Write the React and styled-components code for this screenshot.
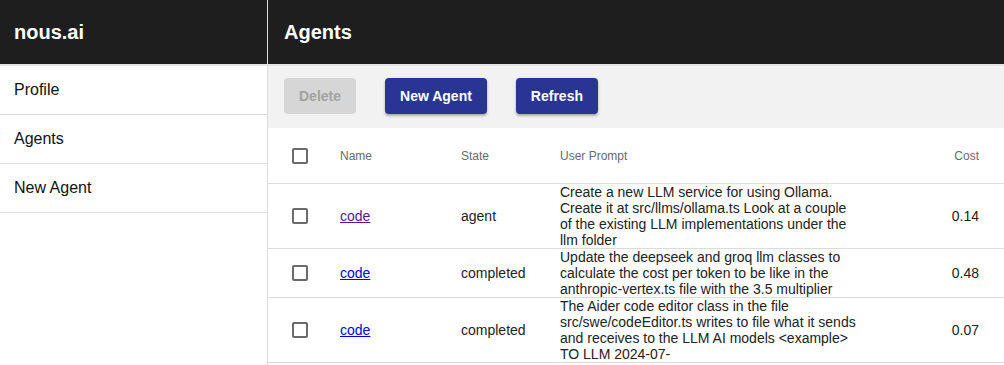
import React from 'react';
import styled, { createGlobalStyle } from 'styled-components';

const GlobalStyle = createGlobalStyle`
  html, body {
    margin: 0;
    padding: 0;
    background: #fff;
    font-family: "Liberation Sans", Arial, Helvetica, sans-serif;
  }
`

const agents = [
  {
    name: 'code',
    visited: true,
    state: 'agent',
    prompt: 'Create a new LLM service for using Ollama. Create it at src/llms/ollama.ts Look at a couple of the existing LLM implementations under the llm folder',
    cost: '0.14',
  },
  {
    name: 'code',
    state: 'completed',
    prompt: 'Update the deepseek and groq llm classes to calculate the cost per token to be like in the anthropic-vertex.ts file with the 3.5 multiplier',
    cost: '0.48',
  },
  {
    name: 'code',
    state: 'completed',
    prompt: 'The Aider code editor class in the file src/swe/codeEditor.ts writes to file what it sends and receives to the LLM AI models <example> TO LLM 2024-07-',
    cost: '0.07',
  },
];

export default function App(){
  return(
    <>
      <GlobalStyle/>
      <Page>
        <Sidebar>
          <Bar>
            <Brand>nous.ai</Brand>
          </Bar>
          <NavItem>Profile</NavItem>
          <NavItem>Agents</NavItem>
          <NavItem>New Agent</NavItem>
        </Sidebar>
        <Main>
          <Bar>
            <Title>Agents</Title>
          </Bar>
          <Toolbar>
            <Button disabled>Delete</Button>
            <Button>New Agent</Button>
            <Button>Refresh</Button>
          </Toolbar>
          <Table>
            <colgroup>
              <col style={{width: 72}}/>
              <col style={{width: 121}}/>
              <col style={{width: 99}}/>
              <col style={{width: 310}}/>
              <col/>
            </colgroup>
            <thead>
              <tr>
                <HeadCell><Check/></HeadCell>
                <HeadCell>Name</HeadCell>
                <HeadCell>State</HeadCell>
                <HeadCell>User Prompt</HeadCell>
                <HeadCell align="right">Cost</HeadCell>
              </tr>
            </thead>
            <tbody>
              {agents.map((a, i) => (
                <tr key={i}>
                  <Cell><Check/></Cell>
                  <Cell><CodeLink href="#" visited={a.visited}>{a.name}</CodeLink></Cell>
                  <Cell>{a.state}</Cell>
                  <Cell><Prompt>{a.prompt}</Prompt></Cell>
                  <Cell align="right">{a.cost}</Cell>
                </tr>
              ))}
            </tbody>
          </Table>
        </Main>
      </Page>
    </>
  )
}

const Page = styled.div`
  display: flex;
  height: 365px;
  overflow: hidden;
`

const Sidebar = styled.nav`
  width: 267px;
  flex-shrink: 0;
  border-right: 1px solid #dcdcdc;
  display: flex;
  flex-direction: column;
`

const Bar = styled.header`
  height: 64px;
  background: #1e1e1e;
  color: #fff;
  display: flex;
  align-items: center;
  border-bottom: 2px solid #e4e4e4;
  flex-shrink: 0;
`

const Brand = styled.div`
  font-size: 20px;
  font-weight: bold;
  padding-left: 14px;
`

const Title = styled.div`
  font-size: 20px;
  font-weight: bold;
  padding-left: 16px;
`

const NavItem = styled.div`
  height: 48px;
  display: flex;
  align-items: center;
  padding-left: 14px;
  font-size: 16px;
  color: #111;
  border-bottom: 1px solid #dcdcdc;
`

const Main = styled.main`
  flex: 1;
  display: flex;
  flex-direction: column;
  min-width: 0;
`

const Toolbar = styled.div`
  background: #f2f2f2;
  height: 62px;
  display: flex;
  align-items: center;
  gap: 29px;
  padding-left: 16px;
  box-sizing: border-box;
  padding-bottom: 2px;
`

const Button = styled.button`
  height: 36px;
  padding: 0 15px;
  border: none;
  border-radius: 4px;
  font-family: inherit;
  font-size: 14px;
  font-weight: bold;
  color: #fff;
  background: #283593;
  box-shadow: 0 2px 2px rgba(0,0,0,0.22), 0 1px 4px rgba(0,0,0,0.12);
  cursor: pointer;

  &:disabled {
    background: #d6d6d6;
    color: #a2a2a2;
    box-shadow: none;
    cursor: default;
  }
`

const Table = styled.table`
  width: 100%;
  border-collapse: collapse;
  table-layout: fixed;
`

const HeadCell = styled.th`
  height: 55px;
  padding: 0;
  padding-right: ${({align}) => align === 'right' ? '25px' : '0'};
  text-align: ${({align}) => align || 'left'};
  font-size: 12px;
  font-weight: normal;
  color: #6a6a6a;
  border-bottom: 1px solid #dcdcdc;

  &:first-child {
    padding-left: 24px;
  }
`

const Cell = styled.td`
  padding: 0;
  padding-right: ${({align}) => align === 'right' ? '25px' : '0'};
  text-align: ${({align}) => align || 'left'};
  font-size: 14px;
  line-height: 16px;
  color: #222;
  border-bottom: 1px solid #dcdcdc;
  vertical-align: middle;

  &:first-child {
    padding-left: 24px;
  }
`

const Prompt = styled.div`
  max-width: 300px;
`

const Check = styled.span`
  display: block;
  width: 16px;
  height: 16px;
  box-sizing: border-box;
  border: 2px solid #6b6b6b;
  border-radius: 2px;
`

const CodeLink = styled.a`
  color: ${({visited}) => visited ? '#551a8b' : '#0000ee'};
  text-decoration: underline;
`
